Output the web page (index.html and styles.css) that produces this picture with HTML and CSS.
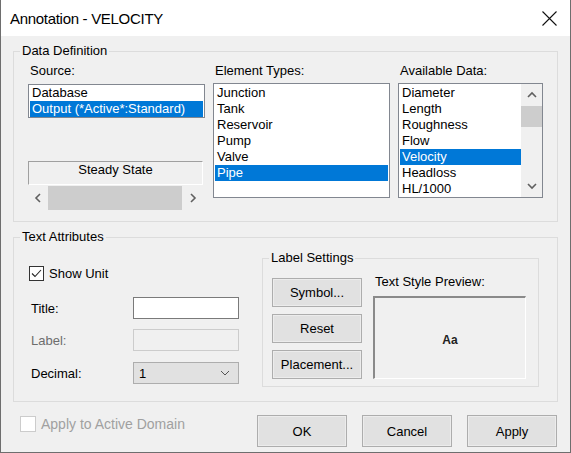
FILE: index.html
```html
<!DOCTYPE html>
<html>
<head>
<meta charset="utf-8">
<link rel="stylesheet" href="styles.css">
</head>
<body>
<div class="window">
  <div class="titlebar">
    <span class="title">Annotation - VELOCITY</span>
    <svg class="close" width="15" height="15" viewBox="0 0 15 15"><path d="M0.5 0.5L14.5 14.5M14.5 0.5L0.5 14.5" stroke="#111" stroke-width="1.1" fill="none"/></svg>
  </div>
  <div class="content">
    <fieldset class="group data-def">
      <legend>Data Definition</legend>
      <div class="dd-grid">
        <div class="col">
          <div class="lbl">Source:</div>
          <div class="listbox source-list">
            <div class="item">Database</div>
            <div class="item sel">Output (*Active*:Standard)</div>
          </div>
          <div class="steady">Steady State</div>
          <div class="hscroll">
            <div class="harrow"><svg width="8" height="10" viewBox="0 0 8 10"><path d="M6 1L2 5L6 9" stroke="#606060" stroke-width="1.6" fill="none"/></svg></div>
            <div class="hthumb"></div>
            <div class="harrow"><svg width="8" height="10" viewBox="0 0 8 10"><path d="M2 1L6 5L2 9" stroke="#606060" stroke-width="1.6" fill="none"/></svg></div>
          </div>
        </div>
        <div class="col">
          <div class="lbl">Element Types:</div>
          <div class="listbox tall">
            <div class="item">Junction</div>
            <div class="item">Tank</div>
            <div class="item">Reservoir</div>
            <div class="item">Pump</div>
            <div class="item">Valve</div>
            <div class="item sel">Pipe</div>
          </div>
        </div>
        <div class="col">
          <div class="lbl">Available Data:</div>
          <div class="listbox tall avail">
            <div class="items">
              <div class="item">Diameter</div>
              <div class="item">Length</div>
              <div class="item">Roughness</div>
              <div class="item">Flow</div>
              <div class="item sel">Velocity</div>
              <div class="item">Headloss</div>
              <div class="item">HL/1000</div>
            </div>
            <div class="vscroll">
              <div class="varrow"><svg width="10" height="8" viewBox="0 0 10 8"><path d="M1 6L5 2L9 6" stroke="#606060" stroke-width="1.6" fill="none"/></svg></div>
              <div class="vthumb"></div>
              <div class="vspace"></div>
              <div class="varrow"><svg width="10" height="8" viewBox="0 0 10 8"><path d="M1 2L5 6L9 2" stroke="#606060" stroke-width="1.6" fill="none"/></svg></div>
            </div>
          </div>
        </div>
      </div>
    </fieldset>

    <fieldset class="group text-attr">
      <legend>Text Attributes</legend>
      <div class="ta-row">
        <div class="ta-left">
          <label class="check-row">
            <span class="checkbox"><svg width="13" height="13" viewBox="0 0 13 13"><path d="M2 6.5L5 9.5L11 3" stroke="#222" stroke-width="1.1" fill="none"/></svg></span>
            <span>Show Unit</span>
          </label>
          <div class="form">
            <div class="frow"><span class="flbl">Title:</span><span class="input"></span></div>
            <div class="frow"><span class="flbl disabled">Label:</span><span class="input off"></span></div>
            <div class="frow"><span class="flbl">Decimal:</span><span class="combo"><span>1</span><svg width="10" height="6" viewBox="0 0 10 6"><path d="M1 1L5 5L9 1" stroke="#555" stroke-width="1" fill="none"/></svg></span></div>
          </div>
        </div>
        <fieldset class="group label-settings">
          <legend>Label Settings</legend>
          <div class="ls-row">
            <div class="ls-buttons">
              <div class="btn small">Symbol...</div>
              <div class="btn small">Reset</div>
              <div class="btn small">Placement...</div>
            </div>
            <div class="ls-preview">
              <div class="lbl">Text Style Preview:</div>
              <div class="preview"><span>Aa</span></div>
            </div>
          </div>
        </fieldset>
      </div>
    </fieldset>

    <div class="bottom">
      <label class="check-row dis">
        <span class="checkbox off"></span>
        <span>Apply to Active Domain</span>
      </label>
      <div class="actions">
        <div class="btn big">OK</div>
        <div class="btn big">Cancel</div>
        <div class="btn big">Apply</div>
      </div>
    </div>
  </div>
</div>
</body>
</html>
```

FILE: styles.css
```css
* { box-sizing: border-box; }
html, body { margin: 0; padding: 0; }
body {
  width: 571px;
  height: 453px;
  overflow: hidden;
  font-family: "Liberation Sans", Arial, sans-serif;
  font-size: 13px;
  color: #000;
  background: #f0f0f0;
}
.window {
  width: 571px;
  height: 453px;
  border: 1px solid #6e6e6e;
  border-top: none;
  background: #f0f0f0;
  display: flex;
  flex-direction: column;
}
.titlebar {
  height: 36px;
  flex: none;
  background: #fff;
  display: flex;
  align-items: center;
  justify-content: space-between;
  padding: 0 13px 0 9px;
}
.title { font-size: 15px; letter-spacing: -0.3px; }
.close { display: block; }

.content { padding: 8px 12px 0 12px; }

fieldset.group {
  margin: 0;
  padding: 0;
  border: 1px solid #dcdcdc;
  min-width: 0;
}
fieldset.group > legend {
  padding: 0 2px;
  margin-left: 6px;
  line-height: 14px;
  font-size: 13px;
}

fieldset.data-def { height: 178px; }
.dd-grid {
  display: grid;
  grid-template-columns: 177px 177px 145px;
  column-gap: 8px;
  padding: 5px 0 0 14px;
}
.col { display: flex; flex-direction: column; }
.lbl { line-height: 15px; height: 15px; white-space: nowrap; padding-left: 2px; }

.listbox {
  background: #fff;
  border: 1px solid #828790;
  padding: 1px;
  margin-top: 5px;
}
.item { height: 16px; line-height: 16px; padding-left: 2px; white-space: nowrap; }
.item.sel { background: #0078d7; color: #fff; }
.source-list { height: 34px; margin-top: 6px; padding: 0 1px; }
.tall { height: 115px; }

.steady {
  margin-top: 43px;
  width: 175px;
  height: 24px;
  line-height: 16px;
  text-align: center;
  border-top: 1px solid #a0a0a0;
  border-left: 1px solid #a0a0a0;
  border-right: 1px solid #fff;
  border-bottom: 1px solid #fff;
}
.hscroll {
  margin-top: 1px;
  width: 175px;
  height: 24px;
  display: flex;
}
.harrow { width: 20px; display: flex; align-items: center; justify-content: center; }
.harrow:last-child { width: 21px; }
.hthumb { flex: 1; background: #cdcdcd; }

.avail { display: flex; padding: 1px 0 1px 1px; }
.avail .items { flex: 1; }
.vscroll {
  width: 21px;
  background: #f0f0f0;
  display: flex;
  flex-direction: column;
  margin-top: -1px;
  margin-bottom: -1px;
}
.varrow { height: 22px; display: flex; align-items: center; justify-content: center; }
.vthumb { height: 21px; background: #cdcdcd; }
.vspace { flex: 1; }

fieldset.text-attr { margin-top: 8px; height: 172px; }
.ta-row { display: flex; }
.ta-left { width: 225px; flex: none; padding: 22px 0 0 15px; }
.check-row { display: flex; align-items: center; gap: 5px; height: 15px; }
.checkbox {
  width: 15px;
  height: 15px;
  border: 1px solid #333;
  background: #fff;
  display: flex;
  align-items: center;
  justify-content: center;
}
.form { margin-top: 16px; padding-left: 2px; display: flex; flex-direction: column; gap: 10px; }
.frow { display: grid; grid-template-columns: 102px 106px; align-items: center; height: 22px; }
.frow:last-child { margin-top: 1px; }
.flbl.disabled { color: #6d6d6d; }
.input { height: 22px; background: #fff; border: 1px solid #7a7a7a; }
.input.off { background: #f0f0f0; border-color: #cccccc; }
.combo {
  height: 22px;
  background: #e1e1e1;
  border: 1px solid #adadad;
  display: flex;
  align-items: center;
  justify-content: space-between;
  padding: 0 8px 0 5px;
}

fieldset.label-settings { margin: 7px 0 0 23px; width: 277px; height: 136px; flex: none; }
.ls-row { display: flex; }
.ls-buttons { display: flex; flex-direction: column; gap: 7px; padding: 13px 0 0 9px; }
.btn {
  border: 1px solid #adadad;
  background: #e1e1e1;
  display: flex;
  align-items: center;
  justify-content: center;
  box-shadow: inset 0 0 0 1px #ececec;
}
.btn.small { width: 90px; height: 29px; }
.ls-preview { margin-left: 11px; padding-top: 9px; }
.preview {
  margin-top: 7px;
  width: 153px;
  height: 83px;
  border-top: 2px solid #8a8a8a;
  border-left: 2px solid #8a8a8a;
  border-right: 1px solid #fff;
  border-bottom: 1px solid #fff;
  display: flex;
  align-items: center;
  justify-content: center;
  padding-top: 3px;
  font-size: 12px;
  font-weight: bold;
  color: #222;
}

.bottom { margin-top: 13px; display: flex; align-items: flex-start; }
.bottom .check-row { margin: 1px 0 0 7px; height: 16px; gap: 5px; font-size: 14px; color: #a0a0a0; }
.checkbox.off { width: 16px; height: 16px; border-color: #cccccc; background: #fff; }
.actions { margin-left: auto; margin-right: 1px; display: flex; gap: 15px; }
.btn.big { width: 90px; height: 32px; }
```
